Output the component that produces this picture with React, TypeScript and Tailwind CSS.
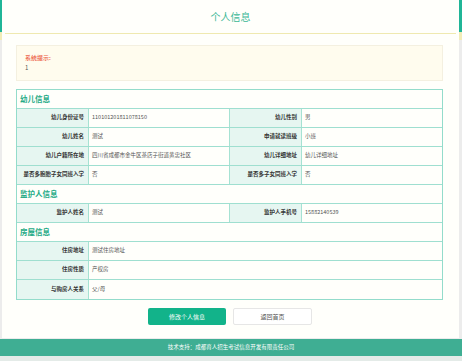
import React from 'react';

type Pair = [string, string];

function Label({ text }: { text: string }) {
  return (
    <div className="flex items-center justify-end pr-[4px] bg-[#e6f6f1] border-r border-[#a6e2d3] font-bold text-[#333]">
      {text}
    </div>
  );
}

function Value({ text, last }: { text: string; last?: boolean }) {
  return (
    <div className={`flex items-center pl-[3px] text-[#555] ${last ? '' : 'border-r border-[#a6e2d3]'}`}>
      {text}
    </div>
  );
}

function Row4({ a, b }: { a: Pair; b: Pair }) {
  return (
    <div className="grid grid-cols-[72px_141px_72px_1fr] h-[19px] border-b border-[#9fdfd0]">
      <Label text={a[0]} />
      <Value text={a[1]} />
      <Label text={b[0]} />
      <Value text={b[1]} last />
    </div>
  );
}

function Row2({ a, last }: { a: Pair; last?: boolean }) {
  return (
    <div className={`grid grid-cols-[72px_1fr] h-[19px] ${last ? '' : 'border-b border-[#9fdfd0]'}`}>
      <Label text={a[0]} />
      <Value text={a[1]} last />
    </div>
  );
}

function Section({ title }: { title: string }) {
  return (
    <div className="flex items-center h-[19px] pl-[3px] border-b border-[#9fdfd0] text-[7.5px] font-bold text-[#1daa85]">
      {title}
    </div>
  );
}

export default function App() {
  return (
    <div
      className="w-[462px] h-[361px] overflow-hidden flex flex-col bg-[linear-gradient(to_bottom,#20b597_0,#20b597_32px,#f2ecb8_32px,#f2ecb8_40px,#ececec_40px)]"
      style={{ fontFamily: '"Noto Sans CJK SC", "Noto Sans", sans-serif' }}
    >
      <div className="mx-[2px] w-[457px] h-[338px] bg-[#fffffb] flex flex-col">
        {/* header */}
        <div className="mx-[3px] h-[34px] flex items-center justify-center border-b border-[#efe9b0] text-[10px] text-[#3cb896] pb-[1px]">
          个人信息
        </div>

        <div className="pl-[14px] pr-[16px]">
          {/* alert */}
          <div className="mt-[11px] h-[36px] bg-[#fffcee] border border-[#f4f0e0] pl-[8px] pt-[7px] text-[6px] leading-[10px]">
            <div className="text-[#ec5a43] font-medium">系统提示:</div>
            <div className="text-[#555]">1</div>
          </div>

          {/* table */}
          <div className="mt-[8px] border border-[#93dccb] text-[5.5px] leading-none">
            <Section title="幼儿信息" />
            <Row4 a={['幼儿身份证号', '110101201811078150']} b={['幼儿性别', '男']} />
            <Row4 a={['幼儿姓名', '测试']} b={['申请就读班级', '小班']} />
            <Row4 a={['幼儿户籍所在地', '四川省成都市金牛区茶店子街道黄忠社区']} b={['幼儿详细地址', '幼儿详细地址']} />
            <Row4 a={['是否多胞胎子女同班入学', '否']} b={['是否多子女同班入学', '否']} />
            <Section title="监护人信息" />
            <Row4 a={['监护人姓名', '测试']} b={['监护人手机号', '15882140539']} />
            <Section title="房屋信息" />
            <Row2 a={['住房地址', '测试住房地址']} />
            <Row2 a={['住房性质', '产权房']} />
            <Row2 a={['与购房人关系', '父/母']} last />
          </div>

          {/* buttons */}
          <div className="mt-[8px] flex justify-center gap-[7px] pl-[1px]">
            <button className="w-[78px] h-[17px] rounded-[2px] bg-[#12b38a] text-white text-[6px]">
              修改个人信息
            </button>
            <button className="w-[79px] h-[17px] rounded-[2px] bg-white border border-[#e6e6e6] text-[#555] text-[6px]">
              返回首页
            </button>
          </div>
        </div>
      </div>

      {/* footer */}
      <div className="mt-[1px] h-[17px] bg-[#3fae93] flex items-center justify-center text-white text-[5.5px]">
        技术支持：成都育人招生考试信息开发有限责任公司
      </div>
      <div className="flex-1 bg-[#e4ebe8]" />
    </div>
  );
}
